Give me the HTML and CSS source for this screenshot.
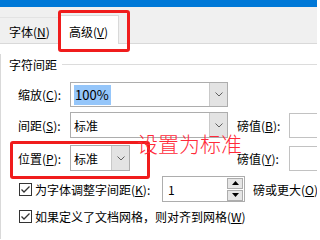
FILE: index.html
```html
<!DOCTYPE html>
<html>
<head>
<meta charset="utf-8">
<link rel="stylesheet" href="styles.css">
</head>
<body>
<div class="titlebar"></div>
<div class="tabstrip">
  <div class="tab">字体(<u>N</u>)</div>
  <div class="tab active">高级(<u>V</u>)</div>
</div>
<div class="panel">
  <div class="group-head"><span>字符间距</span><span class="rule"></span></div>

  <div class="row row1">
    <span class="lbl">缩放(<u>C</u>):</span>
    <div class="combo wide"><span class="val"><span class="sel">100%</span></span><span class="btn"><svg width="8" height="5" viewBox="0 0 8 5"><polyline points="0.5,0.5 4,4 7.5,0.5" fill="none" stroke="#606060" stroke-width="1"/></svg></span></div>
  </div>

  <div class="row row2">
    <span class="lbl">间距(<u>S</u>):</span>
    <div class="combo wide"><span class="val">标准</span><span class="btn"><svg width="8" height="5" viewBox="0 0 8 5"><polyline points="0.5,0.5 4,4 7.5,0.5" fill="none" stroke="#606060" stroke-width="1"/></svg></span></div>
    <span class="lbl right">磅值(<u>B</u>):</span>
    <div class="tb"></div>
  </div>

  <div class="row row3">
    <span class="lbl">位置(<u>P</u>):</span>
    <div class="combo narrow"><span class="val">标准</span><span class="btn"><svg width="8" height="5" viewBox="0 0 8 5"><polyline points="0.5,0.5 4,4 7.5,0.5" fill="none" stroke="#606060" stroke-width="1"/></svg></span></div>
    <span class="lbl right far">磅值(<u>Y</u>):</span>
    <div class="tb"></div>
  </div>

  <div class="row row4">
    <div class="chk-label">
      <svg class="chk" width="13" height="13" viewBox="0 0 13 13"><rect x="0.5" y="0.5" width="12" height="12" fill="#fff" stroke="#333"/><polyline points="2.5,6.5 5,9 10.5,3.5" fill="none" stroke="#333" stroke-width="1.3"/></svg>
      <span>为字体调整字间距(<u>K</u>):</span>
    </div>
    <div class="spin">
      <span class="spin-val">1</span>
      <div class="spin-btns">
        <span class="sb"><svg width="7" height="4" viewBox="0 0 7 4"><polygon points="0,4 3.5,0 7,4" fill="#000"/></svg></span>
        <span class="sb"><svg width="7" height="4" viewBox="0 0 7 4"><polygon points="0,0 3.5,4 7,0" fill="#000"/></svg></span>
      </div>
    </div>
    <span class="after">磅或更大(<u>O</u>)</span>
  </div>

  <div class="row row5">
    <div class="chk-label auto">
      <svg class="chk" width="13" height="13" viewBox="0 0 13 13"><rect x="0.5" y="0.5" width="12" height="12" fill="#fff" stroke="#333"/><polyline points="2.5,6.5 5,9 10.5,3.5" fill="none" stroke="#333" stroke-width="1.3"/></svg>
      <span>如果定义了文档网格，则对齐到网格(<u>W</u>)</span>
    </div>
  </div>
</div>

<div class="mark mark-tab"></div>
<div class="mark mark-pos"></div>
<div class="mark-text">设置为标准</div>
</body>
</html>
```

FILE: styles.css
```css
html, body {
  margin: 0;
  padding: 0;
}
body {
  width: 317px;
  height: 239px;
  overflow: hidden;
  position: relative;
  background: #fff;
  font-family: "Noto Sans CJK SC", "Noto Sans", sans-serif;
  font-size: 12px;
  color: #000;
}
u {
  text-decoration: underline;
  text-underline-offset: 1px;
}
.titlebar {
  height: 7px;
  background: #0078d7;
}
.tabstrip {
  height: 36px;
  background: #f0f0f0;
  border-bottom: 1px solid #d9d9d9;
  display: flex;
  align-items: flex-end;
}
.tab {
  box-sizing: border-box;
  width: 60px;
  height: 26px;
  padding-left: 9px;
  padding-top: 1px;
  display: flex;
  align-items: center;
  white-space: nowrap;
  border-top: 1px solid #e3e3e3;
}
.tab.active {
  width: 59px;
  height: 29px;
  margin-bottom: -1px;
  padding-left: 8px;
  padding-top: 2px;
  background: #fff;
  border: 1px solid #d9d9d9;
  border-bottom: none;
}
.panel {
  border-left: 1px solid #d9d9d9;
  height: 195px;
  padding-left: 8px;
}
.group-head {
  margin-top: 10px;
  height: 20px;
  display: flex;
  align-items: center;
  white-space: nowrap;
}
.group-head .rule {
  flex: 1;
  height: 1px;
  background: #dcdcdc;
  margin-left: 5px;
}
.row {
  display: flex;
  align-items: center;
  padding-left: 9px;
  white-space: nowrap;
}
.row1 { margin-top: 8px; height: 25px; }
.row2 { margin-top: 5px; height: 26px; }
.row3 { margin-top: 7px; height: 26px; }
.row4 { margin-top: 5px; height: 26px; }
.row5 { margin-top: 4px; height: 21px; }
.lbl {
  width: 52px;
  flex: none;
}
.lbl.right {
  margin-left: 9px;
}
.lbl.far {
  margin-left: 107px;
}
.combo {
  box-sizing: border-box;
  height: 100%;
  border: 1px solid #adadad;
  background: #fff;
  display: flex;
  flex: none;
}
.combo.wide { width: 158px; }
.combo.narrow { width: 60px; }
.combo .val {
  flex: 1;
  display: flex;
  align-items: center;
  padding-left: 3px;
}
.combo .sel {
  background: #95c6fa;
  padding: 2px 2px 2px 1px;
  font-size: 13px;
  line-height: 16px;
}
.combo .btn {
  width: 17px;
  background: #e3e3e3;
  border-left: 1px solid #c9c9c9;
  display: flex;
  align-items: center;
  justify-content: center;
}
.tb {
  box-sizing: border-box;
  width: 60px;
  height: 25px;
  flex: none;
  border: 1px solid #c2c2c2;
  background: #fff;
}
.chk-label {
  width: 144px;
  flex: none;
  display: flex;
  align-items: center;
}
.chk-label.auto {
  width: auto;
}
.chk {
  margin-left: 1px;
  margin-right: 3px;
  flex: none;
}
.spin {
  box-sizing: border-box;
  width: 83px;
  height: 26px;
  border: 1px solid #adadad;
  display: flex;
  align-items: center;
  flex: none;
}
.spin-val {
  padding-left: 5px;
}
.spin-btns {
  margin-left: auto;
  margin-right: 1px;
  display: flex;
  flex-direction: column;
  gap: 1px;
}
.sb {
  box-sizing: border-box;
  width: 16px;
  height: 11px;
  background: #e6e6e6;
  border: 1px solid #adadad;
  display: flex;
  align-items: center;
  justify-content: center;
}
.after {
  margin-left: 8px;
}
.mark {
  position: absolute;
  box-sizing: border-box;
  border: 3px solid #f01c1c;
  border-radius: 3px;
}
.mark-tab {
  left: 58px;
  top: 10px;
  width: 72px;
  height: 42px;
}
.mark-pos {
  left: 10px;
  top: 141px;
  width: 140px;
  height: 38px;
  border-width: 3.5px;
}
.mark-text {
  position: absolute;
  left: 137px;
  top: 133px;
  font-size: 21px;
  font-weight: 300;
  line-height: 1;
  color: #ff2a3a;
  white-space: nowrap;
}
```
